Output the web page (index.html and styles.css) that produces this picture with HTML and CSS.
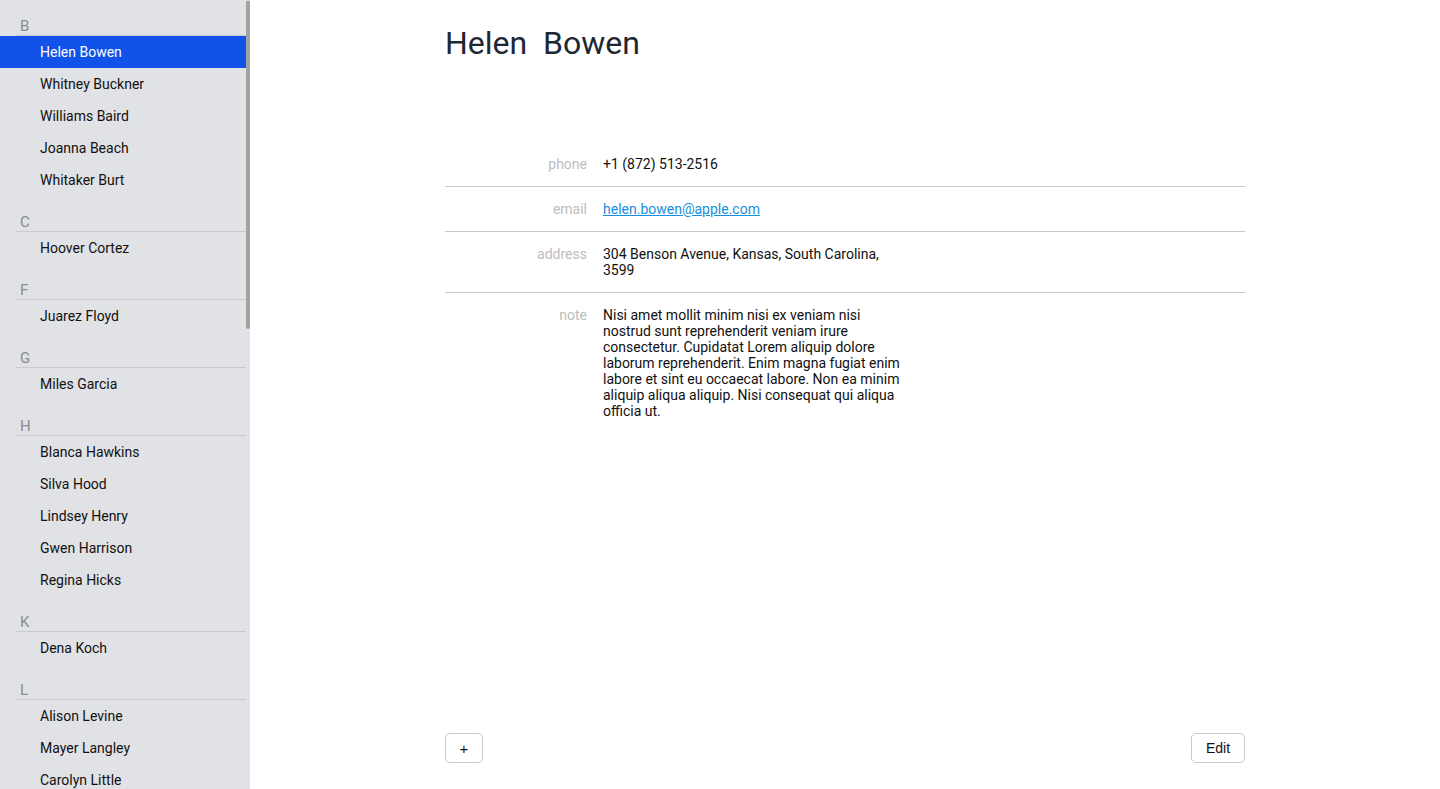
FILE: index.html
```html
<!DOCTYPE html>
<html lang="en">
<head>
<meta charset="utf-8">
<title>Contacts</title>
<link rel="stylesheet" href="styles.css">
</head>
<body>
<div class="app">
  <aside class="sidebar">
    <div class="list">
      <section class="group">
        <h3 class="letter">B</h3>
        <ul class="names">
          <li class="name active">Helen Bowen</li>
          <li class="name">Whitney Buckner</li>
          <li class="name">Williams Baird</li>
          <li class="name">Joanna Beach</li>
          <li class="name">Whitaker Burt</li>
        </ul>
      </section>
      <section class="group">
        <h3 class="letter">C</h3>
        <ul class="names">
          <li class="name">Hoover Cortez</li>
        </ul>
      </section>
      <section class="group">
        <h3 class="letter">F</h3>
        <ul class="names">
          <li class="name">Juarez Floyd</li>
        </ul>
      </section>
      <section class="group">
        <h3 class="letter">G</h3>
        <ul class="names">
          <li class="name">Miles Garcia</li>
        </ul>
      </section>
      <section class="group">
        <h3 class="letter">H</h3>
        <ul class="names">
          <li class="name">Blanca Hawkins</li>
          <li class="name">Silva Hood</li>
          <li class="name">Lindsey Henry</li>
          <li class="name">Gwen Harrison</li>
          <li class="name">Regina Hicks</li>
        </ul>
      </section>
      <section class="group">
        <h3 class="letter">K</h3>
        <ul class="names">
          <li class="name">Dena Koch</li>
        </ul>
      </section>
      <section class="group">
        <h3 class="letter">L</h3>
        <ul class="names">
          <li class="name">Alison Levine</li>
          <li class="name">Mayer Langley</li>
          <li class="name">Carolyn Little</li>
        </ul>
      </section>
    </div>
    <div class="track"><div class="thumb"></div></div>
  </aside>

  <main class="detail">
    <div class="card">
      <h1 class="title">Helen&nbsp; Bowen</h1>
      <dl class="fields">
        <div class="field">
          <dt class="label">phone</dt>
          <dd class="value">+1 (872) 513-2516</dd>
        </div>
        <div class="field">
          <dt class="label">email</dt>
          <dd class="value"><a class="link" href="#">helen.bowen@apple.com</a></dd>
        </div>
        <div class="field">
          <dt class="label">address</dt>
          <dd class="value">304 Benson Avenue, Kansas, South Carolina, 3599</dd>
        </div>
        <div class="field last">
          <dt class="label">note</dt>
          <dd class="value">Nisi amet mollit minim nisi ex veniam nisi nostrud sunt reprehenderit veniam irure consectetur. Cupidatat Lorem aliquip dolore laborum reprehenderit. Enim magna fugiat enim labore et sint eu occaecat labore. Non ea minim aliquip aliqua aliquip. Nisi consequat qui aliqua officia ut.</dd>
        </div>
      </dl>
    </div>
    <div class="toolbar">
      <button class="btn btn-add" type="button">+</button>
      <button class="btn btn-edit" type="button">Edit</button>
    </div>
  </main>
</div>
</body>
</html>
```

FILE: styles.css
```css
* { box-sizing: border-box; }

html, body {
  margin: 0;
  padding: 0;
  height: 100%;
}

body {
  font-family: Roboto, "Liberation Sans", Arial, sans-serif;
  font-size: 14px;
  color: #111;
  background: #fff;
  overflow: hidden;
}

.app {
  display: flex;
  height: 789px;
}

/* Sidebar */
.sidebar {
  flex: 0 0 250px;
  display: flex;
  background: #e1e2e5;
  height: 100%;
  overflow: hidden;
}

.list {
  flex: 0 0 246px;
  overflow: hidden;
}

.track {
  flex: 0 0 4px;
}

.thumb {
  width: 4px;
  height: 328px;
  margin-top: 1px;
  background: #a2a2a2;
  border-radius: 0 0 2px 2px;
}

.group { margin: 0; }

.letter {
  margin: 0 0 0 16px;
  padding: 17px 0 0 4px;
  height: 36px;
  line-height: 18px;
  font-size: 15px;
  font-weight: 400;
  color: #8c8c8c;
  border-bottom: 1px solid #c9cacc;
}

.names {
  list-style: none;
  margin: 0;
  padding: 0;
}

.name {
  height: 32px;
  line-height: 32px;
  padding-left: 40px;
  font-size: 14px;
  color: #111;
  white-space: nowrap;
}

.name.active {
  background: #1152e9;
  color: #fff;
}

/* Detail */
.detail {
  flex: 1;
  display: flex;
  flex-direction: column;
  height: 100%;
}

.card {
  flex: 1;
  width: 800px;
  margin: 0 auto;
  padding-top: 24px;
}

.title {
  margin: 0 0 80px;
  font-size: 32px;
  line-height: 38px;
  font-weight: 400;
  color: #1d2833;
}

.fields {
  margin: 0;
}

.field {
  display: flex;
  padding: 14px 0;
  border-bottom: 1px solid #c8c8c8;
  line-height: 16px;
}

.field.last {
  border-bottom: none;
}

.label {
  flex: 0 0 142px;
  text-align: right;
  color: #bdbdbd;
}

.value {
  margin: 0 0 0 16px;
  max-width: 300px;
  color: #111;
}

.link {
  color: #1590e0;
  text-decoration: underline;
}

.toolbar {
  width: 800px;
  margin: 0 auto;
  padding-bottom: 26px;
  display: flex;
  justify-content: space-between;
}

.btn {
  height: 30px;
  padding: 0;
  font-family: "Liberation Sans", Arial, sans-serif;
  font-size: 14px;
  color: #111;
  background: #fff;
  border: 1px solid #c9c9c9;
  border-radius: 5px;
}

.btn-add {
  width: 38px;
  font-weight: 400;
  font-size: 15px;
}

.btn-edit {
  width: 54px;
}
```
